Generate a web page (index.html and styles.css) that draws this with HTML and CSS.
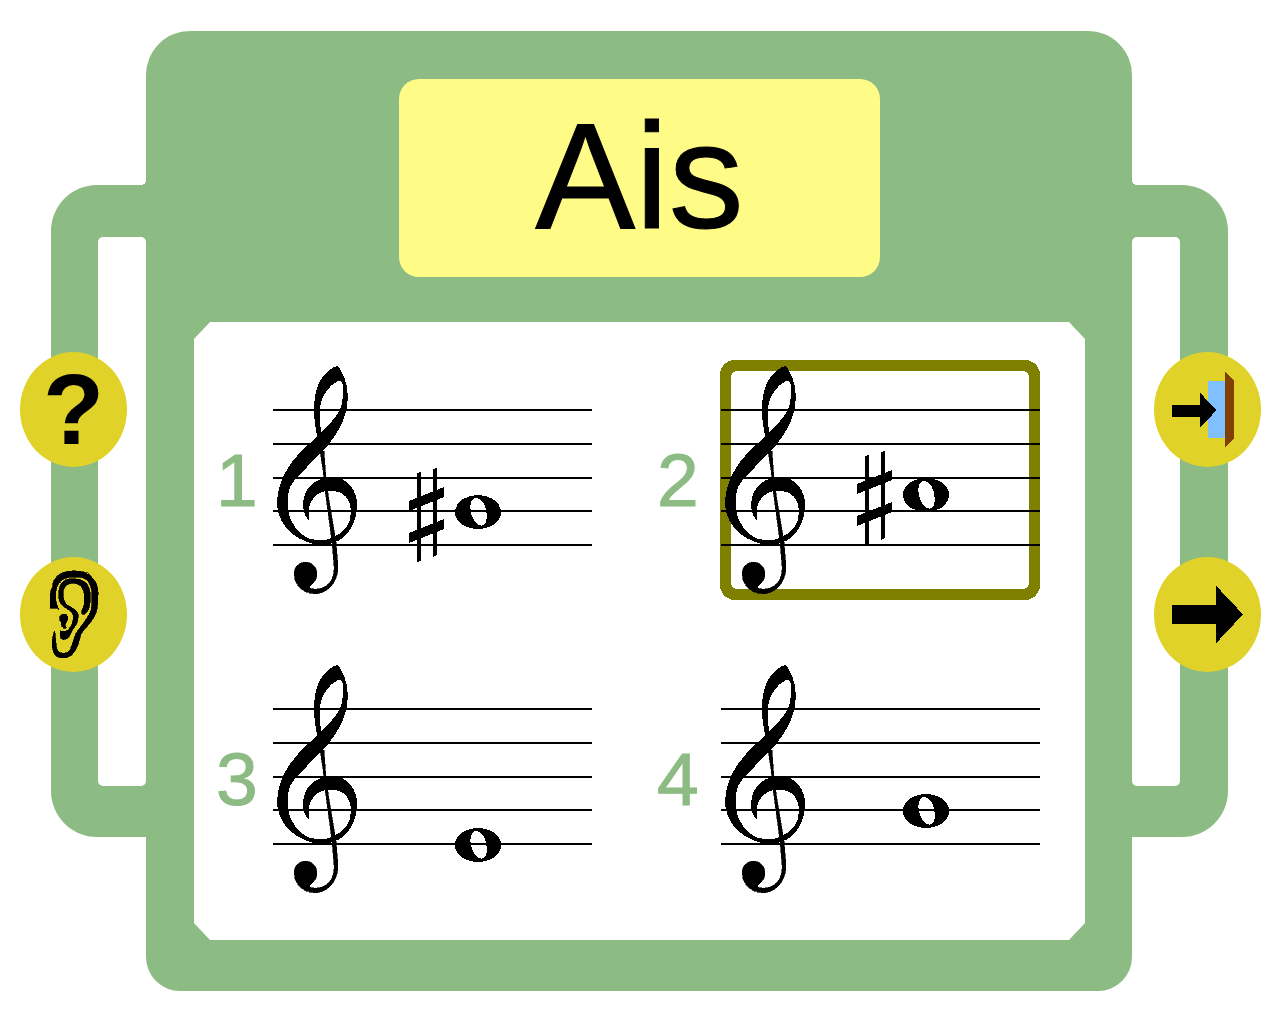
FILE: index.html
```html
<!DOCTYPE html>
<html lang="de">
<head>
<meta charset="utf-8">
<meta name="viewport" content="width=device-width, initial-scale=1">
<title>Ais</title>
<link rel="stylesheet" href="styles.css">
</head>
<body>
<svg class="defs" aria-hidden="true">
  <defs>
    <g id="staff">
      <path d="M1 49H320v2H1zM1 83H320v2H1zM1 117H320v2H1zM1 150H320v2H1zM1 184H320v2H1z"/>
      <path fill-rule="evenodd" d="M66 6C68 8 73 17 75 27C76 36 76 45 74 52C71 64 64 75 56 85L48 93L35 107C27 115 22 120 18 127C15 135 15 150 18 158C24 172 34 180 45 180C50 181 55 180 60 178C72 173 79 164 79 152C79 140 72 130 59 131C45 130 37 141 37 150C36 154 37 158 37 161C33 157 31 151 31 145C31 128 44 117 60 117C76 117 85 131 85 145C85 163 76 178 61 183C55 185 46 185 41 184C19 178 5 162 5 142C6 117 21 98 38 83L45 76C43 65 42 58 42 50C42 35 45 23 52 15C56 11 60 7 66 6ZM49 72C56 66 65 56 68 50C71 43 71 33 71 26C70 21 68 20 66 21C57 25 51 35 49 42C47 50 48 62 49 72Z"/>
      <path stroke="#000" stroke-width=".6" d="M48 91H52L54 119L57 140L64 182L66 206C66 223 56 233 43 234C29 233 22 224 22 213C22 207 27 202 34 202C41 203 45 208 45 214C45 219 42 223 38 226C37 228 39 229 42 229C55 230 63 220 62 206L60 182L53 130L51 110Z"/>
    </g>
    <path id="note" fill-rule="evenodd" d="M-23 0C-23 -10 -12 -17 0 -17S23 -10 23 0S12 17 0 17S-23 10 -23 0ZM-3 -14C-10 -11 -8 2 -4 8C0 14 5 15 7 12C10 8 9 -2 6 -8C3 -13 0 -15 -3 -14Z"/>
    <path id="sharp" d="M-6 -39L-2 -40V49L-6 50ZM10 -43L14 -44V43L10 45ZM-14 -11L21 -25V-15L-14 -1ZM-14 21L21 7V17L-14 31Z"/>
  </defs>
</svg>
<div class="game">
  <nav class="rail rail-left">
    <div class="handle"><div class="hole"></div></div>
    <div class="tools">
      <button class="tool" type="button" aria-label="Hilfe"><span class="help">?</span></button>
      <button class="tool" type="button" aria-label="Anhören">
        <svg viewBox="30 36 321 345" aria-hidden="true">
          <g stroke="#000" stroke-width="2">
          <path d="M120 190V154C121 140 123 132 128 124C128 112 132 104 138 98C148 84 166 78 187 78C212 77 236 81 246 98C260 110 265 128 264 150C263 178 264 198 252 216C240 238 222 252 213 268C207 288 204 308 192 322C184 333 174 339 158 339C144 338 134 333 131 322C128 315 126 305 126 290C127 278 130 266 134 257C136 268 136 285 139 300C139 314 144 322 155 324C169 326 178 321 182 310C188 296 192 278 198 265C207 249 224 232 234 214C246 196 246 180 246 148C245 124 237 106 222 100C205 94 180 95 163 101C144 109 137 132 137 150C136 166 139 180 147 194L142 189Z"/>
          <path d="M146 154C145 132 150 119 158 111C166 102 178 101 188 102C212 100 229 109 236 126C244 143 242 176 236 193C230 204 222 212 215 206C212 199 219 192 222 180C225 158 223 137 215 126C207 116 195 115 184 115C169 116 160 128 159 143C159 160 162 174 173 181C189 190 202 196 204 208C206 225 200 239 191 250C184 258 180 270 176 277C169 284 160 286 153 281C150 277 151 267 151 257C158 261 169 258 174 256C181 246 190 235 190 218C190 202 181 198 169 190C154 182 147 170 146 154Z"/>
          <path d="M149 220C149 211 155 207 163 207C171 208 175 214 174 221C172 230 165 235 165 243C171 246 168 252 162 250C155 248 153 240 154 233C150 230 149 225 149 220Z"/>
          </g>
        </svg>
      </button>
    </div>
  </nav>

  <main class="panel">
    <h1 class="title">Ais</h1>
    <div class="board">
      <button class="option" type="button" aria-pressed="false">
        <span class="number">1</span>
        <svg class="staff" viewBox="0 0 320 240" aria-hidden="true">
          <use href="#staff"/><use href="#sharp" x="151" y="152"/><use href="#note" x="206" y="152"/>
        </svg>
      </button>
      <button class="option" type="button" aria-pressed="true">
        <span class="number">2</span>
        <svg class="staff" viewBox="0 0 320 240" aria-hidden="true">
          <path class="frame" fill-rule="evenodd" d="M15 0H305A15 15 0 0 1 320 15V225A15 15 0 0 1 305 240H15A15 15 0 0 1 0 225V15A15 15 0 0 1 15 0ZM17 11A6 6 0 0 0 11 17V223A6 6 0 0 0 17 229H303A6 6 0 0 0 309 223V17A6 6 0 0 0 303 11Z"/>
          <use href="#staff"/><use href="#sharp" x="151" y="135"/><use href="#note" x="206" y="135"/>
        </svg>
      </button>
      <button class="option" type="button" aria-pressed="false">
        <span class="number">3</span>
        <svg class="staff" viewBox="0 0 320 240" aria-hidden="true">
          <use href="#staff"/><use href="#note" x="206" y="186"/>
        </svg>
      </button>
      <button class="option" type="button" aria-pressed="false">
        <span class="number">4</span>
        <svg class="staff" viewBox="0 0 320 240" aria-hidden="true">
          <use href="#staff"/><use href="#note" x="206" y="152"/>
        </svg>
      </button>
    </div>
  </main>

  <nav class="rail rail-right">
    <div class="handle"><div class="hole"></div></div>
    <div class="tools">
      <button class="tool" type="button" aria-label="Beenden">
        <svg viewBox="42 36 321 345" aria-hidden="true">
          <path fill="#80c0ff" d="M204 123H255V294H204Z"/>
          <path fill="#804000" d="M255 93L282 121V296L255 321Z"/>
          <path d="M96 195H180V158L229 211L180 264V231H96Z"/>
        </svg>
      </button>
      <button class="tool" type="button" aria-label="Weiter">
        <svg viewBox="42 36 321 345" aria-hidden="true">
          <path d="M96 180H228V122L309 208L228 295V237H96Z"/>
        </svg>
      </button>
    </div>
  </nav>
</div>
</body>
</html>
```
FILE: styles.css
```css
:root {
  --green: #8cbb83;
  --yellow: #fefb87;
  --gold: #e0d228;
}

* {
  box-sizing: border-box;
}

body {
  margin: 0;
  background: #fff;
  color: #000;
  font-family: "Liberation Sans", Arial, sans-serif;
}

button {
  margin: 0;
  padding: 0;
  border: 0;
  background: none;
  color: inherit;
  font: inherit;
  cursor: pointer;
}

svg {
  display: block;
  shape-rendering: crispEdges;
}

.defs {
  position: absolute;
  width: 0;
  height: 0;
}

.game {
  display: grid;
  grid-template-columns: 146px 1fr 148px;
  min-height: 100vh;
  padding: 31px 0 33px;
}

/* Side rails: a handle shape with round tools on top of it */
.rail {
  display: grid;
  padding: 154px 0;
}

.handle,
.tools {
  grid-area: 1 / 1;
}

.handle {
  position: relative;
  display: grid;
  background: var(--green);
}

.hole {
  border-radius: 5px;
  background: #fff;
}

.rail-left .handle {
  margin-left: 51px;
  padding: 52px 0 51px 47px;
  border-radius: 46px 0 0 46px;
}

.rail-right .handle {
  margin-right: 52px;
  padding: 52px 48px 51px 0;
  border-radius: 0 46px 46px 0;
}

/* small fillet where the handle meets the panel */
.handle::before {
  content: "";
  position: absolute;
  bottom: 100%;
  width: 5px;
  height: 5px;
}

.rail-left .handle::before {
  right: 0;
  background: radial-gradient(circle at 0 0, transparent 5px, var(--green) 5px);
}

.rail-right .handle::before {
  left: 0;
  background: radial-gradient(circle at 100% 0, transparent 5px, var(--green) 5px);
}

.tools {
  z-index: 1;
  display: flex;
  flex-direction: column;
  justify-content: center;
  gap: 90px;
  padding-top: 2px;
}

.rail-left .tools {
  padding-left: 20px;
}

.rail-right .tools {
  padding-left: 22px;
}

.tool {
  width: 107px;
  height: 115px;
  border-radius: 50%;
  background: var(--gold);
}

.tool svg {
  width: 100%;
  height: 100%;
}

.help {
  display: block;
  font-size: 100px;
  font-weight: bold;
  line-height: 115px;
}

/* Panel */
.panel {
  display: flex;
  flex-direction: column;
  gap: 45px;
  padding: 48px 47px 51px 48px;
  border-radius: 44px 44px 34px 34px;
  background: var(--green);
}

.title {
  align-self: center;
  width: 54%;
  margin: 0;
  padding-bottom: 4px;
  border-radius: 20px;
  background: var(--yellow);
  font-size: 150px;
  font-weight: normal;
  line-height: 194px;
  text-align: center;
  -webkit-text-stroke: 1px currentColor;
}

.board {
  flex: 1;
  display: grid;
  grid-template-columns: 376fr 383fr;
  align-content: space-between;
  column-gap: 65px;
  row-gap: 59px;
  padding: 38px 45px 41px 22px;
  background: #fff;
  clip-path: polygon(16px 0, calc(100% - 16px) 0, 100% 17px, 100% calc(100% - 17px), calc(100% - 16px) 100%, 16px 100%, 0 calc(100% - 17px), 0 17px);
}

.option {
  display: flex;
  align-items: center;
  justify-content: space-between;
}

.number {
  color: var(--green);
  font-size: 75px;
  line-height: 80px;
  -webkit-text-stroke: 1px currentColor;
}

.staff {
  flex: 0 1 320px;
  min-width: 0;
}

.frame {
  fill: #808000;
}
```
